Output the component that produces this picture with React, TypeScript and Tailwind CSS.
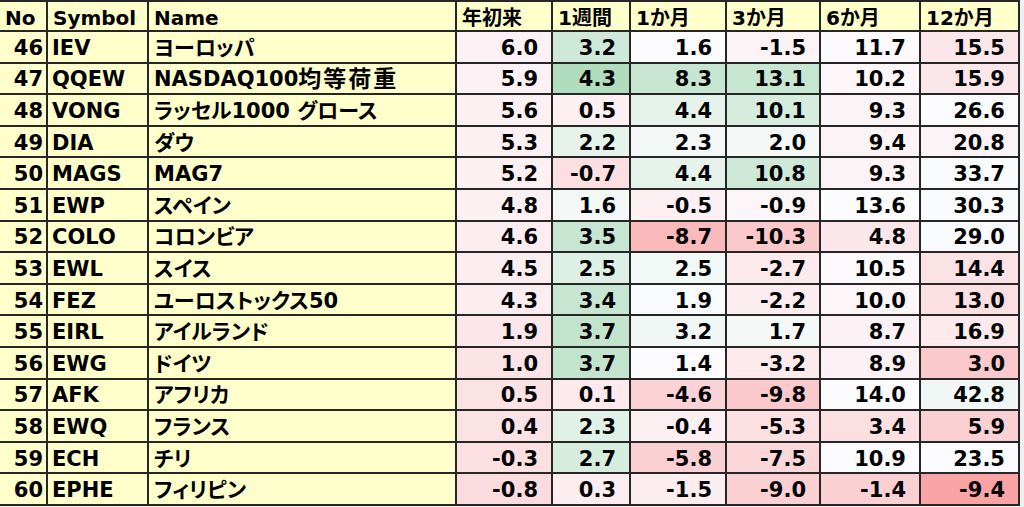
import React from "react";

type Row = {
  no: number;
  symbol: string;
  name: React.ReactNode;
  values: [number, number][]; // [value, scale]  scale: -1 red .. 0 white .. 1 green
};

const headers = ["No", "Symbol", "Name", "年初来", "1週間", "1か月", "3か月", "6か月", "12か月"];

const rows: Row[] = [
  { no: 46, symbol: "IEV", name: "ヨーロッパ", values: [[6.0, -0.07], [3.2, 0.3], [1.6, 0], [-1.5, -0.06], [11.7, -0.02], [15.5, -0.15]] },
  {
    no: 47,
    symbol: "QQEW",
    name: (
      <>
        NASDAQ100<span className="tracking-[2px] text-[23px]">均等荷重</span>
      </>
    ),
    values: [[5.9, -0.07], [4.3, 0.5], [8.3, 0.35], [13.1, 0.35], [10.2, -0.04], [15.9, -0.15]],
  },
  { no: 48, symbol: "VONG", name: "ラッセル1000 グロース", values: [[5.6, -0.08], [0.5, -0.08], [4.4, 0.15], [10.1, 0.25], [9.3, -0.06], [26.6, 0]] },
  { no: 49, symbol: "DIA", name: "ダウ", values: [[5.3, -0.08], [2.2, 0.15], [2.3, 0.05], [2.0, 0.05], [9.4, -0.06], [20.8, -0.06]] },
  { no: 50, symbol: "MAGS", name: "MAG7", values: [[5.2, -0.08], [-0.7, -0.2], [4.4, 0.15], [10.8, 0.3], [9.3, -0.06], [33.7, 0.02]] },
  { no: 51, symbol: "EWP", name: "スペイン", values: [[4.8, -0.08], [1.6, 0.05], [-0.5, -0.08], [-0.9, -0.04], [13.6, 0], [30.3, 0.02]] },
  { no: 52, symbol: "COLO", name: "コロンビア", values: [[4.6, -0.1], [3.5, 0.35], [-8.7, -0.45], [-10.3, -0.35], [4.8, -0.15], [29.0, 0.01]] },
  { no: 53, symbol: "EWL", name: "スイス", values: [[4.5, -0.1], [2.5, 0.2], [2.5, 0.07], [-2.7, -0.12], [10.5, -0.02], [14.4, -0.18]] },
  { no: 54, symbol: "FEZ", name: "ユーロストックス50", values: [[4.3, -0.1], [3.4, 0.35], [1.9, 0.01], [-2.2, -0.1], [10.0, -0.04], [13.0, -0.2]] },
  { no: 55, symbol: "EIRL", name: "アイルランド", values: [[1.9, -0.15], [3.7, 0.38], [3.2, 0.08], [1.7, 0.05], [8.7, -0.07], [16.9, -0.12]] },
  { no: 56, symbol: "EWG", name: "ドイツ", values: [[1.0, -0.17], [3.7, 0.38], [1.4, 0], [-3.2, -0.12], [8.9, -0.07], [3.0, -0.35]] },
  { no: 57, symbol: "AFK", name: "アフリカ", values: [[0.5, -0.18], [0.1, -0.12], [-4.6, -0.28], [-9.8, -0.35], [14.0, 0], [42.8, 0.08]] },
  { no: 58, symbol: "EWQ", name: "フランス", values: [[0.4, -0.18], [2.3, 0.18], [-0.4, -0.08], [-5.3, -0.2], [3.4, -0.2], [5.9, -0.3]] },
  { no: 59, symbol: "ECH", name: "チリ", values: [[-0.3, -0.2], [2.7, 0.25], [-5.8, -0.3], [-7.5, -0.25], [10.9, -0.01], [23.5, 0]] },
  { no: 60, symbol: "EPHE", name: "フィリピン", values: [[-0.8, -0.22], [0.3, -0.1], [-1.5, -0.1], [-9.0, -0.3], [-1.4, -0.3], [-9.4, -0.6]] },
];

const white = [252, 252, 255];
const green = [99, 190, 123];
const red = [248, 105, 107];

function scaleColor(t: number) {
  const target = t >= 0 ? green : red;
  const a = Math.min(1, Math.abs(t));
  const c = white.map((w, i) => Math.round(w + (target[i] - w) * a));
  return `rgb(${c[0]}, ${c[1]}, ${c[2]})`;
}

const cell = "border-r-2 border-b-2 border-[#262626] flex items-center whitespace-nowrap overflow-hidden pt-[3px]";

export default function App() {
  return (
    <div className="w-[1024px] h-[507px] bg-[#f0f0f0] overflow-hidden">
      <div
        className="grid grid-cols-[48px_101px_308px_96px_78px_96px_94px_100px_99px] grid-rows-[30px_repeat(15,31.6px)] border-t-2 border-[#262626] w-fit font-bold text-[21px] text-black leading-none [font-feature-settings:'palt']"
        style={{ fontFamily: '"DejaVu Sans", "Noto Sans CJK JP", sans-serif' }}
      >
        {headers.map((h) => (
          <div key={h} className={`${cell} bg-[#ffffcc] pl-[5px] text-[20px]`}>
            {h}
          </div>
        ))}
        {rows.map((r) => (
          <React.Fragment key={r.no}>
            <div className={`${cell} bg-[#ffffcc] justify-end pr-[3px]`}>{r.no}</div>
            <div className={`${cell} bg-[#ffffcc] pl-[4px]`}>{r.symbol}</div>
            <div className={`${cell} bg-[#ffffcc] pl-[5px]`}>{r.name}</div>
            {r.values.map(([v, t], i) => (
              <div key={i} className={`${cell} justify-end pr-[13px]`} style={{ backgroundColor: scaleColor(t) }}>
                {v.toFixed(1)}
              </div>
            ))}
          </React.Fragment>
        ))}
      </div>
    </div>
  );
}
